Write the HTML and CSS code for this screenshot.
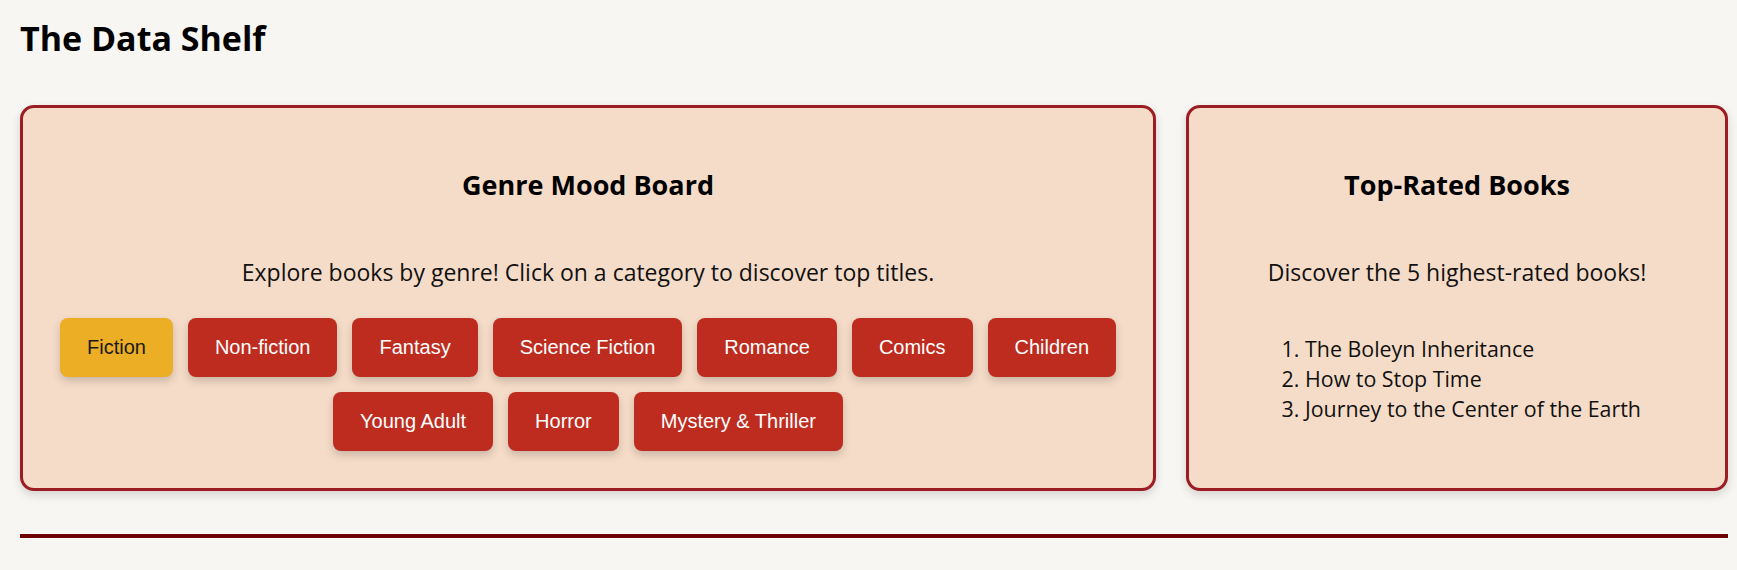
FILE: index.html
```html
<!DOCTYPE html>
<html lang="en">
<head>
<meta charset="utf-8">
<title>The Data Shelf</title>
<link rel="stylesheet" href="styles.css">
</head>
<body>
<h1 class="site-title">The Data Shelf</h1>
<main class="panels">
  <section class="card card-genres">
    <h2 class="card-title">Genre Mood Board</h2>
    <p class="card-text">Explore books by genre! Click on a category to discover top titles.</p>
    <div class="genre-list">
      <button class="genre-btn is-active">Fiction</button>
      <button class="genre-btn">Non-fiction</button>
      <button class="genre-btn">Fantasy</button>
      <button class="genre-btn">Science Fiction</button>
      <button class="genre-btn">Romance</button>
      <button class="genre-btn">Comics</button>
      <button class="genre-btn">Children</button>
      <button class="genre-btn">Young Adult</button>
      <button class="genre-btn">Horror</button>
      <button class="genre-btn">Mystery &amp; Thriller</button>
    </div>
  </section>
  <section class="card card-top">
    <h2 class="card-title">Top-Rated Books</h2>
    <p class="card-text">Discover the 5 highest-rated books!</p>
    <ol class="book-list">
      <li>The Boleyn Inheritance</li>
      <li>How to Stop Time</li>
      <li>Journey to the Center of the Earth</li>
    </ol>
  </section>
</main>
<hr class="divider">
</body>
</html>
```

FILE: styles.css
```css
* {
  box-sizing: border-box;
}

body {
  margin: 0;
  padding: 16px 9px 0 20px;
  background: #f8f6f2;
  color: #000;
  font-family: "Open Sans", "Noto Sans", sans-serif;
}

.site-title {
  margin: 0 0 45px;
  font-size: 34px;
  line-height: 44px;
  font-weight: 700;
}

.panels {
  display: grid;
  grid-template-columns: minmax(0, 1136fr) minmax(0, 542fr);
  gap: 30px;
}

.card {
  background: #f5dcc8;
  border: 3px solid #9b1c22;
  border-radius: 14px;
  box-shadow: 0 4px 10px rgba(0, 0, 0, 0.14);
  padding: 59px 33px 37px;
  text-align: center;
}

.card-title {
  margin: 0;
  font-size: 27px;
  line-height: 36px;
  font-weight: 700;
}

.card-text {
  margin: 54px 0 0;
  font-size: 23px;
  line-height: 30px;
  color: #111;
}

.genre-list {
  margin-top: 31px;
  display: flex;
  flex-wrap: wrap;
  justify-content: center;
  gap: 15px;
}

.genre-btn {
  font-family: "Liberation Sans", Arial, sans-serif;
  font-size: 20px;
  line-height: 23px;
  padding: 18px 27px;
  border: 0;
  border-radius: 8px;
  background: #be2c20;
  color: #fff;
  box-shadow: 0 4px 8px rgba(0, 0, 0, 0.18);
  cursor: pointer;
}

.genre-btn.is-active {
  background: #ecae24;
  color: #1a1a1a;
}

.book-list {
  margin: 47px 0 0 40px;
  padding-left: 43px;
  text-align: left;
  font-size: 21.4px;
  line-height: 30px;
  color: #111;
}

.divider {
  margin: 43px 0 0;
  height: 4px;
  border: 0;
  background: #6e0000;
}
```
